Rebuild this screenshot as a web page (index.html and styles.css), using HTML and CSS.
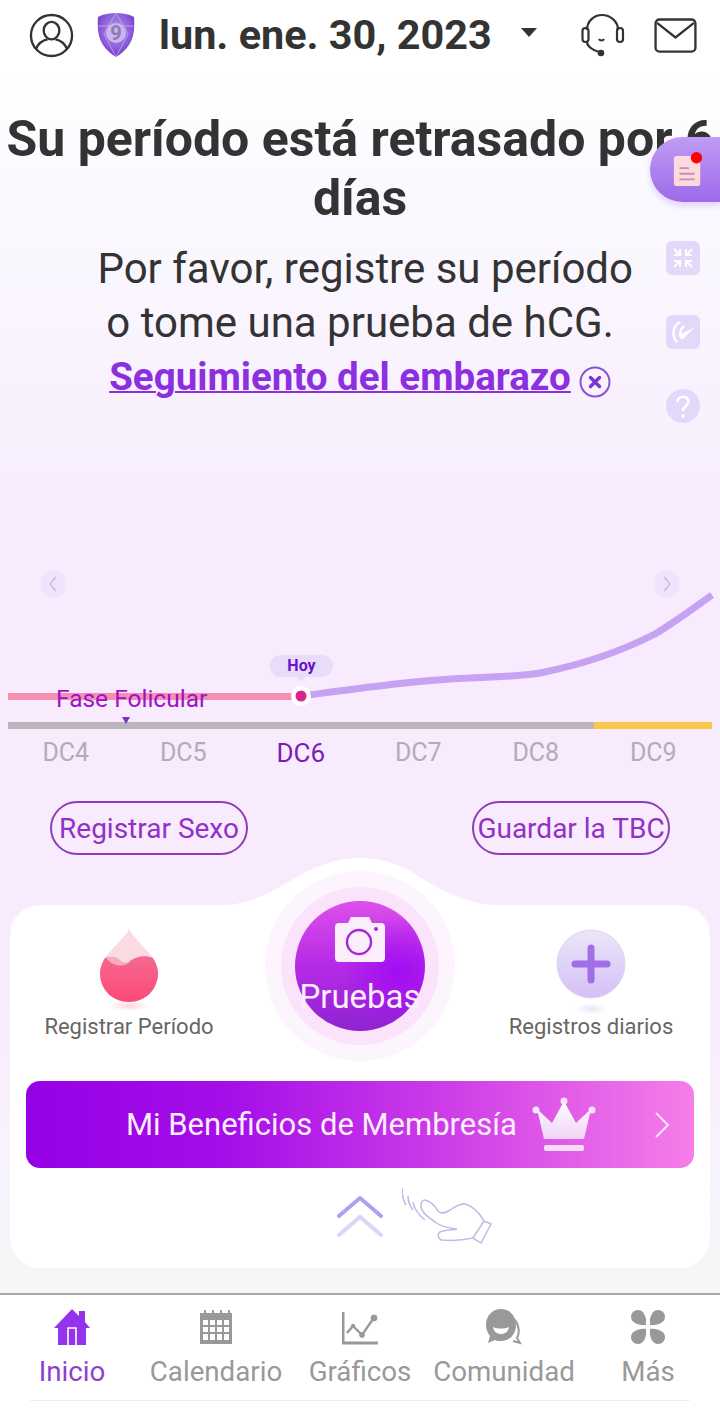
FILE: index.html
```html
<!DOCTYPE html>
<html lang="es">
<head>
  <meta charset="UTF-8" />
  <title>Inicio</title>
  <meta name="viewport" content="width=device-width, initial-scale=1.0"/>
  <link rel="stylesheet" href="styles.css">
</head>
<body>
<div class="app">

  <header class="topbar">
    <svg class="ic-user" viewBox="0 0 46 46" fill="none" stroke="#333" stroke-width="2.4">
      <circle cx="23" cy="23" r="21"/>
      <ellipse cx="23" cy="18" rx="8" ry="9"/>
      <path d="M7 37c3-7 9-9.500 12-10M39 37c-3-7-9-9.500-12-10"/>
    </svg>
    <svg class="ic-badge" viewBox="0 0 40 46">
      <defs>
        <radialGradient id="shield" cx=".5" cy=".4" r=".7">
          <stop offset="0" stop-color="#b59bea"/>
          <stop offset=".6" stop-color="#8a5ad8"/>
          <stop offset="1" stop-color="#6426b8"/>
        </radialGradient>
      </defs>
      <path d="M20 1c6 0 13 1 18 4 1 15 0 29-18 40C2 34 1 20 2 5c5-3 12-4 18-4z" fill="url(#shield)"/>
      <path d="M20 1l-12 21 12 23M20 1l12 21-12 23M2 14l36 0" fill="none" stroke="#c9b4f2" stroke-width=".7"/>
      <circle cx="20" cy="21" r="10" fill="#c9b4f0"/>
      <text x="20" y="28" text-anchor="middle" class="badge-num">9</text>
    </svg>
    <span class="date">lun. ene. 30, 2023</span>
    <span class="caret"></span>
    <svg class="ic-help" viewBox="0 0 44 44" fill="none" stroke="#333" stroke-width="2.2">
      <path d="M6 17c0-9 7-15 15-15s16 6 16 15"/>
      <rect x="1.500" y="15" width="6" height="14" rx="3"/>
      <rect x="36" y="15" width="6" height="14" rx="3"/>
      <path d="M6 29c0 4 5 8 12 10"/>
      <circle cx="20" cy="40" r="2.200" fill="#333"/>
      <path d="M18 26c1 2 4 2 5 0"/>
    </svg>
    <svg class="ic-mail" viewBox="0 0 44 36" fill="none" stroke="#333" stroke-width="2.4">
      <rect x="1.500" y="1.500" width="41" height="33" rx="4"/>
      <path d="M3 5l19 15L41 5"/>
    </svg>
  </header>

  <main class="home">
    <h1 class="title">Su período está retrasado por 6 días</h1>
    <p class="hint">&nbsp;Por favor, registre su período<br>o tome una prueba de hCG.</p>
    <div class="track-row">
      <a class="track-link" href="#">Seguimiento del embarazo</a>
      <svg class="ic-close" viewBox="0 0 32 32">
        <circle cx="16" cy="16" r="14.500" fill="none" stroke="#8a52d0" stroke-width="2"/>
        <path d="M11.500 11.500l9 9M20.500 11.500l-9 9" stroke="#7a35d0" stroke-width="3.400" stroke-linecap="round"/>
      </svg>
    </div>

    <div class="float-note">
      <svg class="ic-note" viewBox="0 0 34 38">
        <rect x="2" y="4" width="28" height="32" rx="3" fill="#fbd9dc"/>
        <path d="M8 17h10M8 23h16M8 29h16" stroke="#c88fb0" stroke-width="2"/>
        <circle cx="26" cy="6" r="6" fill="#f00"/>
      </svg>
    </div>
    <div class="side-tools">
      <svg class="tool" viewBox="0 0 34 34">
        <rect width="34" height="34" rx="6" fill="#e3d8fa"/>
        <path d="M8 8l6 6M14 8v6H8M26 8l-6 6M20 8v6h6M8 26l6-6M14 26v-6H8M26 26l-6-6M20 26v-6h6" fill="none" stroke="#fff" stroke-width="2"/>
      </svg>
      <svg class="tool" viewBox="0 0 34 34">
        <rect width="34" height="34" rx="6" fill="#e3d8fa"/>
        <path d="M14 7c-7 4-9 13-3 20M18 11c-4 3-5 8-2 13" fill="none" stroke="#fff" stroke-width="2.400"/>
        <path d="M13 20l16-8-12 12z" fill="#fff"/>
      </svg>
      <svg class="tool" viewBox="0 0 34 34">
        <circle cx="17" cy="17" r="17" fill="#e3d8fa"/>
        <path d="M11.500 13c0-7 11-7 11 0 0 4-5.500 4-5.500 9" fill="none" stroke="#fff" stroke-width="2.600"/>
        <circle cx="17" cy="27" r="1.800" fill="#fff"/>
      </svg>
    </div>

    <section class="chart">
      <svg class="chart-lines" viewBox="0 0 720 160">
        <path d="M301 126C370 117 420 110 470 108C500 107 520 106 540 103C580 95 620 82 655 64C675 52 695 37 712 25" fill="none" stroke="#c6a3f2" stroke-width="7"/>
        <rect x="8" y="123" width="292" height="7" fill="#f58fb0"/>
        <circle cx="301" cy="126" r="10" fill="#fff"/>
        <circle cx="301" cy="126" r="5.500" fill="#d8258f"/>
        <rect x="8" y="152" width="586" height="7" fill="#bab6be"/>
        <rect x="594" y="152" width="118" height="7" fill="#f9c84b"/>
        <path d="M122 147h8l-4 7z" fill="#7a35c8"/>
        <ellipse cx="53" cy="14" rx="13" ry="14" fill="#efe4fb"/>
        <path d="M56 7l-6 7 6 7" fill="none" stroke="#c8b6e0" stroke-width="1.500"/>
        <ellipse cx="667" cy="14" rx="13" ry="14" fill="#efe4fb"/>
        <path d="M664 7l6 7-6 7" fill="none" stroke="#c8b6e0" stroke-width="1.500"/>
        <path d="M295 106h12l-6 5z" fill="#e9dcfb"/>
      </svg>
      <span class="today">Hoy</span>
      <span class="phase">Fase Folicular</span>
    </section>

    <ul class="days">
      <li>DC4</li>
      <li>DC5</li>
      <li class="current">DC6</li>
      <li>DC7</li>
      <li>DC8</li>
      <li>DC9</li>
    </ul>

    <div class="quick">
      <a class="pill" href="#">Registrar Sexo</a>
      <a class="pill" href="#">Guardar la TBC</a>
    </div>

    <section class="card">
      <svg class="bump" viewBox="0 0 340 50">
        <path d="M20 50C60 50 80 36 104 23C125 10 145 2 170 2C195 2 215 10 236 25C260 38 280 50 320 50z" fill="#fff"/>
      </svg>
      <div class="log-row">
        <div class="log">
          <svg class="ic-drop" viewBox="0 0 58 82">
            <defs>
              <linearGradient id="dropfill" x1="0" y1="0" x2="0" y2="1">
                <stop offset="0" stop-color="#f4688e"/>
                <stop offset="1" stop-color="#fd4a78"/>
              </linearGradient>
              <radialGradient id="dropshade">
                <stop offset="0" stop-color="#fbd3db"/>
                <stop offset="1" stop-color="#fff"/>
              </radialGradient>
            </defs>
            <ellipse cx="29" cy="77" rx="20" ry="5" fill="url(#dropshade)"/>
            <path d="M29 0C23 13 0 26 0 44c0 17 13 29 29 29s29-12 29-29C58 26 35 13 29 0z" fill="#fbdbe3"/>
            <path d="M5 29c5-2 9-1 13 3 4 3 8 3 12 0 7-5 15-6 23-3 3 5 5 10 5 15 0 17-13 29-29 29S0 61 0 44c0-5 2-10 5-15z" fill="url(#dropfill)"/>
            <path d="M6 29c5-2 10-2 14 2 3 3 7 4 11 1-6 7-18 6-25-3z" fill="#f7a9bd"/>
          </svg>
          <span class="log-label">Registrar Período</span>
        </div>
        <div class="log">
          <svg class="ic-plus" viewBox="0 0 70 86">
            <defs>
              <linearGradient id="plusfill" x1="0" y1="0" x2="0" y2="1">
                <stop offset="0" stop-color="#ece6f8"/>
                <stop offset="1" stop-color="#d4c0f6"/>
              </linearGradient>
              <radialGradient id="plusshade">
                <stop offset="0" stop-color="#efe3f7"/>
                <stop offset="1" stop-color="#fff"/>
              </radialGradient>
            </defs>
            <ellipse cx="35" cy="80" rx="17" ry="6" fill="url(#plusshade)"/>
            <circle cx="35" cy="35" r="34" fill="url(#plusfill)" stroke="#e0d4f4"/>
            <path d="M35 19v32M19 35h32" stroke="#a06fe6" stroke-width="7" stroke-linecap="round"/>
          </svg>
          <span class="log-label">Registros diarios</span>
        </div>
      </div>

      <div class="test-halo">
        <div class="test-mid">
          <button class="test-btn">
            <svg class="ic-camera" viewBox="0 0 52 46">
              <path d="M5 7h9l3-6h18l3 6h9a4 4 0 0 1 4 4v31a4 4 0 0 1-4 4H5a4 4 0 0 1-4-4V11a4 4 0 0 1 4-4z" fill="#fbeefb"/>
              <circle cx="25" cy="26" r="12" fill="none" stroke="#a326d8" stroke-width="2.400"/>
              <circle cx="42" cy="13" r="2" fill="#a326d8"/>
            </svg>
            <span class="test-label">Pruebas</span>
          </button>
        </div>
      </div>

      <a class="member" href="#">
        <span class="member-text">Mi Beneficios de Membresía</span>
        <svg class="ic-crown" viewBox="0 0 64 56">
          <defs>
            <linearGradient id="crownfill" x1="0" y1="0" x2="0" y2="1">
              <stop offset="0" stop-color="#fff"/>
              <stop offset="1" stop-color="#efd3f5"/>
            </linearGradient>
          </defs>
          <path d="M32 4L44 26 59 12 52 42H12L5 12 20 26z" fill="url(#crownfill)"/>
          <circle cx="32" cy="4" r="3.500" fill="#f8e4fa"/>
          <circle cx="4" cy="13" r="3.500" fill="#f8e4fa"/>
          <circle cx="60" cy="13" r="3.500" fill="#f8e4fa"/>
          <rect x="12" y="48" width="40" height="6" rx="2" fill="#f5dcf6"/>
        </svg>
        <svg class="ic-chev" viewBox="0 0 16 28">
          <path d="M2 2l12 12L2 26" fill="none" stroke="#fbe6fb" stroke-width="2"/>
        </svg>
      </a>

      <div class="swipe">
        <svg class="ic-up" viewBox="0 0 46 42" fill="none" stroke-width="4" stroke-linecap="round">
          <path d="M2 20L23 2l21 18" stroke="#b19ff0"/>
          <path d="M2 39L23 21l21 18" stroke="#dcd5f8"/>
        </svg>
        <svg class="ic-hand" viewBox="0 0 92 56" fill="none" stroke="#c5bbe6" stroke-width="1.600">
          <path d="M0 0c0 6 1 12 4 17M6 8c0 5 2 10 5 14M11 14c1 7 6 13 12 18"/>
          <path d="M23 12C28 13 33 18 36 23C40 27 44 25 48 22C53 19 58 15 63 16C70 18 74 22 78 27L82 33L89 36L79 55L71 50C62 52 50 53 40 52C36 51 35 46 38 44C43 42 50 42 55 41C47 40 38 38 33 34C26 29 19 24 19 18C19 14 20 12 23 12z"/>
          <path d="M82 33L71 50"/>
        </svg>
      </div>
    </section>
  </main>

  <nav class="tabs">
    <a class="tab active" href="#">
      <svg class="tab-ic" viewBox="0 0 36 36">
        <path d="M18 0L25 7V2h6v11l5 6h-4v17H4V19H0z" fill="#9333ee"/>
        <path d="M14 36V19h8v17" fill="none" stroke="#fff" stroke-width="1.600"/>
      </svg>
      <span>Inicio</span>
    </a>
    <a class="tab" href="#">
      <svg class="tab-ic" viewBox="0 0 36 36">
        <path d="M2 4h4V1h2v3h6V1h2v3h6V1h2v3h6V1h2v3h2v31H2z" fill="#999"/>
        <path d="M5 11h5v5H5zM12 11h5v5h-5zM19 11h5v5h-5zM26 11h5v5h-5zM5 18h5v5H5zM12 18h5v5h-5zM19 18h5v5h-5zM26 18h5v5h-5zM5 25h5v6H5zM12 25h5v6h-5zM19 25h5v6h-5zM26 25h5v6h-5z" fill="#fff"/>
      </svg>
      <span>Calendario</span>
    </a>
    <a class="tab" href="#">
      <svg class="tab-ic" viewBox="0 0 36 36" fill="none" stroke="#999">
        <path d="M1 3v31h35" stroke-width="3"/>
        <path d="M5 24l6-7 9 9 11-16" stroke-width="2.400"/>
        <circle cx="32" cy="9" r="3" fill="#999"/>
        <circle cx="20" cy="26" r="2.400" fill="#999"/>
        <circle cx="11" cy="17" r="1.800" fill="#999"/>
      </svg>
      <span>Gráficos</span>
    </a>
    <a class="tab" href="#">
      <svg class="tab-ic" viewBox="0 0 36 36">
        <path d="M28 10c5 5 6 14 3 19l3 5-7-2" fill="none" stroke="#999" stroke-width="2"/>
        <path d="M15 0c9 0 15 7 15 16s-6 16-15 16c-2 0-4 0-6-1l-7 3 2-7C1 23 0 20 0 16 0 7 6 0 15 0z" fill="#999"/>
        <path d="M7 18c5 2 11 2 16 0-1 5-4 7-8 7s-7-2-8-7z" fill="#fff"/>
      </svg>
      <span>Comunidad</span>
    </a>
    <a class="tab" href="#">
      <svg class="tab-ic" viewBox="0 0 36 36" fill="#999">
        <path d="M8 1c5 0 9 6 8 15-8 1-15-3-15-8 0-4 3-7 7-7z"/>
        <path d="M28 1c-5 0-9 6-8 15 8 1 15-3 15-8 0-4-3-7-7-7z"/>
        <path d="M8 35c5 0 9-6 8-15-8-1-15 3-15 8 0 4 3 7 7 7z"/>
        <path d="M28 35c-5 0-9-6-8-15 8-1 15 3 15 8 0 4-3 7-7 7z"/>
      </svg>
      <span>Más</span>
    </a>
  </nav>

</div>
</body>
</html>
```

FILE: styles.css
```css
* {
  box-sizing: border-box;
}

body {
  margin: 0;
  font-family: Roboto, "Noto Sans", sans-serif;
  background-color: #fff;
  color: #333;
}

a {
  text-decoration: none;
}

.app {
  position: relative;
  width: 720px;
  height: 1409px;
  overflow: hidden;
}

/* top bar */
.topbar {
  display: flex;
  align-items: center;
  height: 70px;
  padding-left: 29px;
}

.ic-user {
  width: 45px;
  height: 45px;
}

.ic-badge {
  width: 40px;
  height: 46px;
  margin-left: 22px;
}

.badge-num {
  font-size: 20px;
  font-weight: 700;
  fill: #8e7bb0;
}

.date {
  margin-left: 23px;
  font-size: 41.400px;
  font-weight: 700;
  white-space: nowrap;
}

.caret {
  width: 0;
  height: 0;
  margin-left: 29px;
  margin-top: -5px;
  border-left: 8px solid transparent;
  border-right: 8px solid transparent;
  border-top: 9px solid #333;
}

.ic-help {
  width: 44px;
  height: 44px;
  margin-left: 44px;
}

.ic-mail {
  width: 43px;
  height: 35px;
  margin-left: 29px;
}

/* main area */
.home {
  position: relative;
  height: 1223px;
  padding-top: 40px;
  background: linear-gradient(#fff 0, #fbfaff 100px, #f7ebfd 500px, #f7ebfd 900px, #f8f3fd 1080px, #f6f6f6 1223px);
}

.title {
  margin: 0;
  font-size: 50px;
  line-height: 59px;
  font-weight: 700;
  text-align: center;
}

.hint {
  margin: 14px 0 0;
  font-size: 42px;
  line-height: 54px;
  text-align: center;
}

.track-row {
  display: flex;
  justify-content: center;
  align-items: center;
  gap: 8px;
  height: 54px;
  margin-top: -1px;
}

.track-link {
  font-size: 38.500px;
  font-weight: 700;
  color: #8b2fe0;
  text-decoration: underline;
  text-decoration-thickness: 2px;
}

.ic-close {
  width: 32px;
  height: 32px;
  margin-top: 12px;
}

/* floating buttons at the right edge */
.float-note {
  position: absolute;
  top: 67px;
  right: 0;
  display: flex;
  align-items: center;
  width: 70px;
  height: 65px;
  padding-left: 22px;
  border-radius: 33px 0 0 33px;
  background: linear-gradient(#c19bf5, #9c6ae8);
  box-shadow: 0 4px 6px rgba(180, 140, 240, .35);
}

.ic-note {
  width: 32px;
  height: 38px;
}

.side-tools {
  position: absolute;
  top: 171px;
  left: 666px;
  display: flex;
  flex-direction: column;
  gap: 40px;
}

.tool {
  display: block;
  width: 34px;
  height: 34px;
}

/* chart */
.chart {
  position: relative;
  height: 160px;
  margin-top: 167px;
}

.chart-lines {
  display: block;
  width: 720px;
  height: 160px;
}

.today {
  position: absolute;
  left: 270px;
  top: 85px;
  width: 63px;
  height: 22px;
  border-radius: 11px;
  background-color: #e9dcfb;
  color: #6a10c8;
  font-size: 16px;
  font-weight: 700;
  line-height: 22px;
  text-align: center;
}

.phase {
  position: absolute;
  left: 56px;
  top: 115px;
  font-size: 24.500px;
  line-height: 28px;
  color: #a012c8;
}

.days {
  display: grid;
  grid-template-columns: repeat(6, 117.500px);
  height: 44px;
  margin: 0;
  padding: 0 0 0 7px;
  list-style: none;
  font-size: 25px;
  line-height: 46px;
  text-align: center;
  color: #b1adb7;
}

.days .current {
  color: #7a1cb8;
  font-size: 26px;
}

.quick {
  display: flex;
  justify-content: space-between;
  margin-top: 27px;
  padding: 0 50px;
}

.pill {
  display: block;
  width: 198px;
  height: 54px;
  border: 2px solid #8b3fb5;
  border-radius: 27px;
  font-size: 28px;
  line-height: 51px;
  text-align: center;
  white-space: nowrap;
  color: #9230c8;
}

/* white card */
.card {
  position: relative;
  height: 363px;
  margin: 50px 10px 0;
  padding-top: 24px;
  border-radius: 30px;
  background-color: #fff;
}

.bump {
  position: absolute;
  left: 180px;
  top: -49px;
  width: 340px;
  height: 50px;
}

.log-row {
  display: flex;
  justify-content: space-between;
  height: 152px;
  padding: 0 34px 0 34px;
}

.log {
  display: flex;
  flex-direction: column;
  align-items: center;
  width: 170px;
}

.ic-drop {
  width: 58px;
  height: 82px;
}

.ic-plus {
  width: 70px;
  height: 86px;
}

.log-label {
  margin-top: 2px;
  font-size: 22px;
  line-height: 28px;
  white-space: nowrap;
  color: #666;
}

.log:last-child .log-label {
  margin-top: -2px;
}

.test-halo {
  position: absolute;
  left: 255px;
  top: -34px;
  display: flex;
  justify-content: center;
  align-items: center;
  width: 190px;
  height: 190px;
  border-radius: 50%;
  background-color: #fdf5fd;
}

.test-mid {
  display: flex;
  justify-content: center;
  align-items: center;
  width: 158px;
  height: 158px;
  border-radius: 50%;
  background-color: #fbe3fb;
}

.test-btn {
  display: flex;
  flex-direction: column;
  align-items: center;
  width: 130px;
  height: 130px;
  padding: 15px 0 0;
  border: none;
  border-radius: 50%;
  background: radial-gradient(circle at 80% 55%, #a30cf2 0, rgba(170, 20, 240, 0) 45%), linear-gradient(#dc50ea 0, #b62ae6 50%, #8e24d0 100%);
  font-family: inherit;
}

.ic-camera {
  width: 52px;
  height: 46px;
}

.test-label {
  margin-top: 15px;
  font-size: 33px;
  line-height: 40px;
  color: #fdeefd;
}

.member {
  display: flex;
  align-items: center;
  height: 87px;
  margin: 0 16px;
  padding-left: 100px;
  border-radius: 14px;
  background: linear-gradient(90deg, #9500e8 0, #a50ee8 30%, #d040e8 65%, #f67ee8 100%);
}

.member-text {
  font-size: 31px;
  color: #fdeefd;
  white-space: nowrap;
}

.ic-crown {
  width: 64px;
  height: 56px;
  margin-left: 15px;
}

.ic-chev {
  width: 16px;
  height: 28px;
  margin-left: 58px;
}

.swipe {
  position: relative;
  display: flex;
  justify-content: center;
  padding-top: 28px;
}

.ic-up {
  width: 46px;
  height: 42px;
}

.ic-hand {
  position: absolute;
  left: 392px;
  top: 20px;
  width: 92px;
  height: 56px;
}

/* bottom tabs */
.tabs {
  display: grid;
  grid-template-columns: repeat(5, 144px);
  height: 116px;
  border-top: 2px solid #a9a9a9;
}

.tab {
  display: flex;
  flex-direction: column;
  align-items: center;
  padding-top: 14px;
  font-size: 27.700px;
  color: #999;
  white-space: nowrap;
}

.tab span {
  margin-top: 9px;
  line-height: 36px;
}

.tab.active {
  color: #8f3fd0;
}

.tab-ic {
  width: 36px;
  height: 36px;
}

.tabs::after {
  content: "";
  position: absolute;
  left: 30px;
  right: 30px;
  bottom: 8px;
  height: 1px;
  background-color: #eee;
}
```
